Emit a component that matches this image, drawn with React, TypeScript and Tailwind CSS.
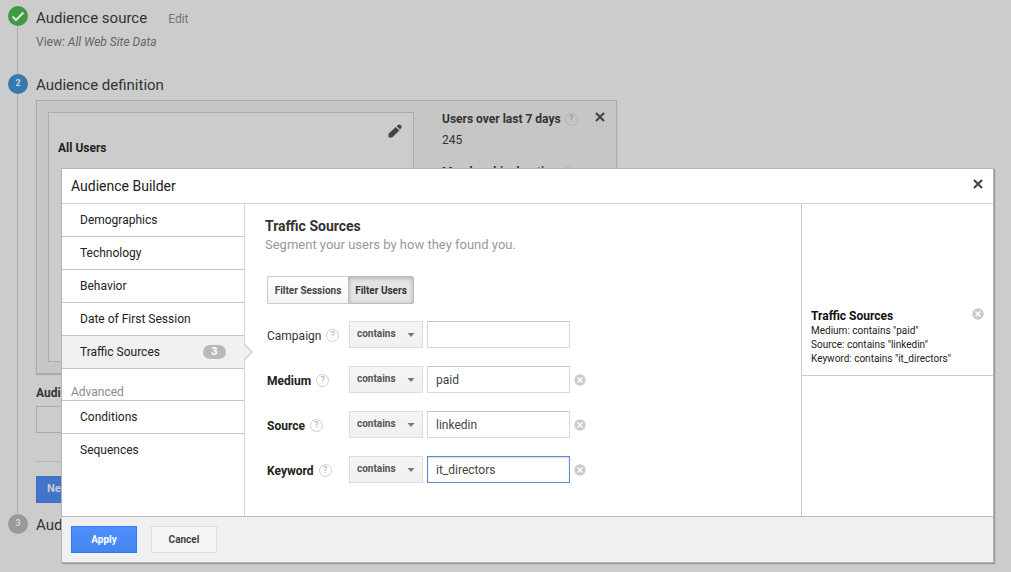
import { useState } from 'react';

type HelpTipProps = {
  topic: string;
  dimmed?: boolean;
};

function HelpTip({ topic, dimmed = false }: HelpTipProps) {
  return (
    <button
      type="button"
      aria-label={`Help: ${topic}`}
      className={`flex size-[13px] shrink-0 items-center justify-center rounded-full border text-[9px] leading-none ${
        dimmed ? 'border-[#b2b2b2] text-[#8c8c8c]' : 'border-[#cfcfcf] text-[#a8a8a8]'
      }`}
    >
      ?
    </button>
  );
}

function CloseIcon() {
  return (
    <svg viewBox="0 0 10 10" className="size-[10px]" aria-hidden="true">
      <path d="M1 1l8 8M9 1L1 9" stroke="#444" strokeWidth="2.1" fill="none" />
    </svg>
  );
}

type ClearButtonProps = {
  label: string;
  onClick?: () => void;
};

function ClearButton({ label, onClick }: ClearButtonProps) {
  return (
    <button type="button" aria-label={label} onClick={onClick} className="size-[12px] shrink-0">
      <svg viewBox="0 0 12 12" className="size-[12px]" aria-hidden="true">
        <circle cx="6" cy="6" r="5.7" fill="#cbcbcb" />
        <path d="M3.5 3.5l5 5M8.5 3.5l-5 5" stroke="#fff" strokeWidth="1.4" fill="none" />
      </svg>
    </button>
  );
}

function PencilIcon() {
  return (
    <svg viewBox="0 0 14 14" className="size-[14px]" fill="#444" aria-hidden="true">
      <path d="M0.5 13.5V9.8L7.8 2.9l3.5 3.5-7.1 7.1z" />
      <path d="M8.7 2.1l1-0.9a2.2 2.2 0 0 1 3.1 3.2l-0.9 1z" />
    </svg>
  );
}

type StepProps = {
  marker: React.ReactNode;
  markerClass: string;
  last?: boolean;
  children: React.ReactNode;
};

function Step({ marker, markerClass, last = false, children }: StepProps) {
  return (
    <li className="flex">
      <div className="flex w-5 shrink-0 flex-col">
        <span
          className={`flex size-5 shrink-0 items-center justify-center rounded-full text-[9px] font-bold text-[#d5d5d5] ${markerClass}`}
        >
          {marker}
        </span>
        {last ? null : <span className="ml-[9px] w-px flex-1 bg-[#adadad]" />}
      </div>
      <div className="ml-2 min-w-0 flex-1">{children}</div>
    </li>
  );
}

function AudiencePage() {
  return (
    <main className="px-2 pt-[6px] text-[#333]">
      <ol>
        <Step
          markerClass="bg-[#3f9a44]"
          marker={
            <svg viewBox="0 0 20 20" className="size-5" fill="none" aria-label="Done">
              <path d="M4.5 10.5l3.5 3.5 7.5-7.5" stroke="#e4e4e4" strokeWidth="2" />
            </svg>
          }
        >
          <div className="h-[68px]">
            <div className="flex items-baseline gap-[21px]">
              <h2 className="text-[15px] leading-6">Audience source</h2>
              <a href="#source" className="text-[12px] text-[#757575]">
                Edit
              </a>
            </div>
            <p className="mt-1 text-[12px] leading-4 text-[#666]">
              View: <em>All Web Site Data</em>
            </p>
          </div>
        </Step>

        <Step markerClass="bg-[#3579b1]" marker="2">
          <h2 className="text-[15px] leading-[22px]">Audience definition</h2>
          <section className="mt-1 flex h-[274px] max-w-[581px] border border-[#aaa] bg-[#c6c6c6] px-[11px] pt-[10px] pb-[11px] shadow-[0_1px_1px_#aaa]">
            <div className="mt-px flex w-[366px] justify-between border border-[#adadad] bg-[#ccc] px-[9px]">
              <h3 className="mt-[27px] text-[12px] leading-4 font-bold text-[#222]">All Users</h3>
              <button type="button" aria-label="Edit segment" className="mt-[11px] mr-[2px] h-[14px]">
                <PencilIcon />
              </button>
            </div>
            <div className="ml-7 flex-1 text-[12px] leading-4">
              <div className="flex items-center gap-1">
                <h3 className="font-bold">Users over last 7 days</h3>
                <HelpTip topic="users over last 7 days" dimmed />
              </div>
              <p className="mt-[5px]">245</p>
              <div className="mt-4 flex items-center gap-1">
                <h3 className="font-bold">Membership duration</h3>
                <HelpTip topic="membership duration" dimmed />
              </div>
            </div>
            <button type="button" aria-label="Close definition" className="mt-px h-[10px]">
              <CloseIcon />
            </button>
          </section>
          <label htmlFor="audience-name" className="mt-[11px] block text-[12px] leading-4 font-bold">
            Audience name
          </label>
          <input
            id="audience-name"
            className="mt-[5px] block h-[27px] w-[366px] border border-[#aaa] px-2 text-[12px]"
          />
          <hr className="mt-7 max-w-[581px] border-[#b5b5b5]" />
          <button
            type="button"
            className="mt-[14px] mb-[11px] block h-[27px] border border-[#3a6fc8] bg-[#4274cc] px-[10px] text-[11px] font-bold text-[#ccc]"
          >
            Next step
          </button>
        </Step>

        <Step markerClass="bg-[#999]" marker="3" last>
          <h2 className="text-[15px] leading-[22px]">Audience destinations</h2>
        </Step>
      </ol>
    </main>
  );
}

const sections = ['Demographics', 'Technology', 'Behavior', 'Date of First Session', 'Traffic Sources'];
const advancedSections = ['Conditions', 'Sequences'];
const fields = ['Campaign', 'Medium', 'Source', 'Keyword'];

type SidebarProps = {
  active: string;
  count: number;
  onSelect: (section: string) => void;
};

function Sidebar({ active, count, onSelect }: SidebarProps) {
  return (
    <nav className="w-[183px] shrink-0 border-r border-[#d4d4d4] text-[12px] text-[#222]">
      <ul>
        {sections.map((section) => {
          const selected = section === active;
          return (
            <li key={section} className="relative border-b border-[#c6c6c6]">
              <button
                type="button"
                onClick={() => onSelect(section)}
                className={`flex h-8 w-full items-center justify-between pr-[18px] pl-[18px] ${
                  selected ? 'bg-[#f0f0f0]' : ''
                }`}
              >
                {section}
                {selected ? (
                  <span className="flex h-[14px] w-[23px] items-center justify-center rounded-full bg-[#b9b9b9] text-[11px] font-bold text-white">
                    {count}
                  </span>
                ) : null}
              </button>
              {selected ? (
                <svg
                  viewBox="0 0 9 16"
                  className="absolute top-2 -right-[9px] h-4 w-[9px]"
                  aria-hidden="true"
                >
                  <path d="M0 0l8 8-8 8" fill="#f0f0f0" stroke="#ccc" strokeWidth="1.3" />
                </svg>
              ) : null}
            </li>
          );
        })}
      </ul>
      <h3 className="mt-4 border-b border-[#c6c6c6] pl-[9px] leading-[15px] text-[#8c8c8c]">Advanced</h3>
      <ul>
        {advancedSections.map((section) => (
          <li key={section} className="border-b border-[#c6c6c6] last:border-b-0">
            <button
              type="button"
              onClick={() => onSelect(section)}
              className="flex h-8 w-full items-center pl-[18px]"
            >
              {section}
            </button>
          </li>
        ))}
      </ul>
    </nav>
  );
}

type FilterRowProps = {
  name: string;
  value: string;
  focused?: boolean;
  onChange: (value: string) => void;
};

function FilterRow({ name, value, focused = false, onChange }: FilterRowProps) {
  const id = name.toLowerCase();

  return (
    <div className="flex h-[27px] items-center">
      <div className="flex w-[82px] shrink-0 items-center gap-[5px] pt-[2px]">
        <label
          htmlFor={id}
          className={`text-[12px] leading-4 ${value ? 'font-bold text-[#222]' : 'text-[#333]'}`}
        >
          {name}
        </label>
        <HelpTip topic={name} />
      </div>
      <div className="relative w-[74px] shrink-0">
        <select
          aria-label={`${name} match type`}
          className="block h-[27px] w-full appearance-none border border-[#dcdcdc] bg-linear-to-b from-[#f5f5f5] to-[#f0f0f0] pb-[2px] pl-[7px] text-[10px] font-bold text-[#555]"
        >
          <option>contains</option>
          <option>exactly matches</option>
        </select>
        <svg
          viewBox="0 0 8 4"
          className="pointer-events-none absolute top-3 right-2 h-1 w-2"
          aria-hidden="true"
        >
          <path d="M0.5 0h7L4 4z" fill="#777" />
        </svg>
      </div>
      <input
        id={id}
        type="text"
        value={value}
        onChange={(event) => onChange(event.target.value)}
        className={`ml-1 h-[27px] w-[143px] border px-2 text-[12px] text-[#444] outline-none ${
          focused
            ? 'border-[#5a8bd6] shadow-[inset_0_1px_2px_#d0d8e8]'
            : 'border-[#d9d9d9] border-t-[#c4c4c4]'
        }`}
      />
      {value ? (
        <div className="ml-1 flex">
          <ClearButton label={`Clear ${name}`} onClick={() => onChange('')} />
        </div>
      ) : null}
    </div>
  );
}

export default function App() {
  const [active, setActive] = useState('Traffic Sources');
  const [scope, setScope] = useState('users');
  const [values, setValues] = useState<Record<string, string>>({
    Campaign: '',
    Medium: 'paid',
    Source: 'linkedin',
    Keyword: 'it_directors',
  });
  const used = fields.filter((field) => values[field]);

  return (
    <div className="relative min-h-screen overflow-hidden bg-[#ccc] font-[Roboto,sans-serif]">
      <AudiencePage />

      <div className="absolute inset-0 pt-[168px] pr-[17px] pb-[9px] pl-[61px]">
        <div
          role="dialog"
          aria-labelledby="builder-title"
          className="flex h-full flex-col border border-[#b4b4b4] bg-white shadow-[1px_1px_1px_#999]"
        >
          <header className="flex h-[35px] shrink-0 items-center justify-between border-b border-[#d4d4d4] pr-[10px] pl-[9px]">
            <h1 id="builder-title" className="text-[14px] text-[#222]">
              Audience Builder
            </h1>
            <button type="button" aria-label="Close" className="mb-[5px]">
              <CloseIcon />
            </button>
          </header>

          <div className="flex min-h-0 flex-1">
            <Sidebar active={active} count={used.length} onSelect={setActive} />

            <section className="min-w-0 flex-1 pt-3 pl-5">
              <h2 className="text-[14px] leading-5 font-bold text-[#333]">Traffic Sources</h2>
              <p className="text-[13px] leading-[18px] text-[#999]">Segment your users by how they found you.</p>
              <div className="mt-[22px] ml-[2px] flex h-7 text-[10px] font-bold text-[#444]">
                <button
                  type="button"
                  aria-pressed={scope === 'sessions'}
                  onClick={() => setScope('sessions')}
                  className="w-[81px] rounded-l-xs border border-r-0 border-[#ccc] bg-linear-to-b from-white to-[#f5f5f5]"
                >
                  Filter Sessions
                </button>
                <button
                  type="button"
                  aria-pressed={scope === 'users'}
                  onClick={() => setScope('users')}
                  className="w-[66px] rounded-r-xs border border-[#bbb] bg-[#e4e4e4] text-[#333] shadow-[inset_0_1px_4px_#aaa]"
                >
                  Filter Users
                </button>
              </div>
              <div className="mt-[17px] ml-[2px] flex flex-col gap-[18px]">
                {fields.map((field) => (
                  <FilterRow
                    key={field}
                    name={field}
                    value={values[field]}
                    focused={field === 'Keyword'}
                    onChange={(value) => setValues((prev) => ({ ...prev, [field]: value }))}
                  />
                ))}
              </div>
            </section>

            <aside className="w-[192px] shrink-0 border-l border-[#ccc]">
              <div className="flex items-start justify-between border-b border-[#ccc] pt-[104px] pr-[9px] pb-[9px] pl-[9px]">
                <div>
                  <h3 className="text-[12px] leading-4 font-bold text-[#111]">Traffic Sources</h3>
                  <ul className="text-[10px] leading-[14px] text-[#222]">
                    {used.map((field) => (
                      <li key={field}>
                        {field}: contains "{values[field]}"
                      </li>
                    ))}
                  </ul>
                </div>
                <ClearButton label="Remove traffic sources" />
              </div>
            </aside>
          </div>

          <footer className="flex h-[46px] shrink-0 items-center gap-[14px] border-t border-[#bbb] bg-[#f0f0f0] pl-[9px] text-[10px] font-bold">
            <button
              type="button"
              className="h-[27px] w-[66px] border border-[#3079ed] bg-linear-to-b from-[#4d90fe] to-[#4486f0] text-white"
            >
              Apply
            </button>
            <button
              type="button"
              className="h-[27px] w-[66px] border border-[#dcdcdc] bg-[#f5f5f5] text-[#444]"
            >
              Cancel
            </button>
          </footer>
        </div>
      </div>
    </div>
  );
}
